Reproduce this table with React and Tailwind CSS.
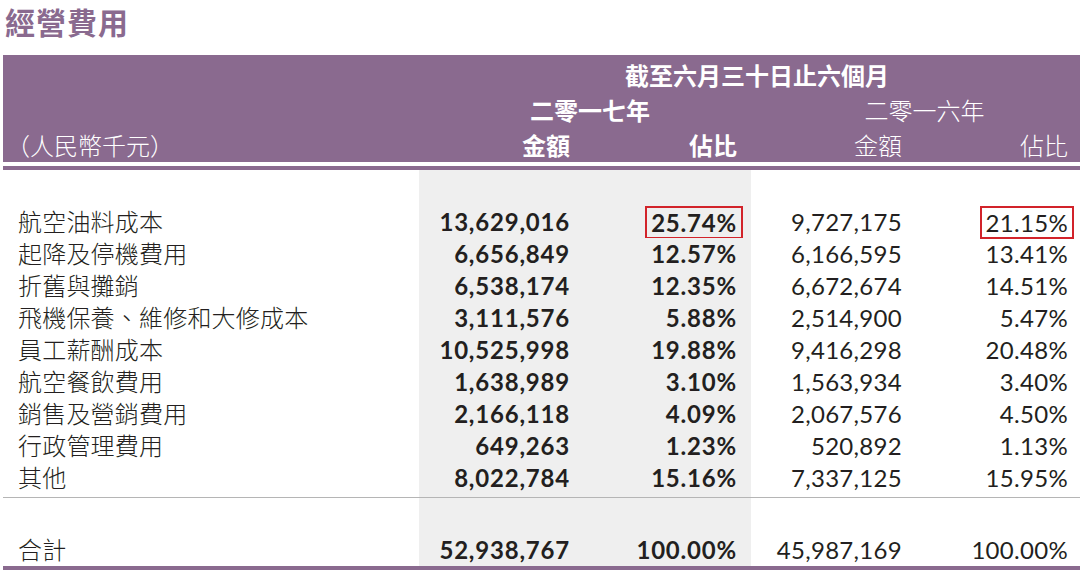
import React from "react";

const rows = [
  { label: "航空油料成本", a17: "13,629,016", p17: "25.74%", a16: "9,727,175", p16: "21.15%", mark: true },
  { label: "起降及停機費用", a17: "6,656,849", p17: "12.57%", a16: "6,166,595", p16: "13.41%" },
  { label: "折舊與攤銷", a17: "6,538,174", p17: "12.35%", a16: "6,672,674", p16: "14.51%" },
  { label: "飛機保養、維修和大修成本", a17: "3,111,576", p17: "5.88%", a16: "2,514,900", p16: "5.47%" },
  { label: "員工薪酬成本", a17: "10,525,998", p17: "19.88%", a16: "9,416,298", p16: "20.48%" },
  { label: "航空餐飲費用", a17: "1,638,989", p17: "3.10%", a16: "1,563,934", p16: "3.40%" },
  { label: "銷售及營銷費用", a17: "2,166,118", p17: "4.09%", a16: "2,067,576", p16: "4.50%" },
  { label: "行政管理費用", a17: "649,263", p17: "1.23%", a16: "520,892", p16: "1.13%" },
  { label: "其他", a17: "8,022,784", p17: "15.16%", a16: "7,337,125", p16: "15.95%" },
];

const cjk = "font-['Noto_Sans_CJK_TC','Noto_Sans_CJK_SC',sans-serif]";
const num = "font-['Lato','Liberation_Sans',sans-serif] text-[24px]";
const grid = "grid grid-cols-[416px_166px_166px_166px_163px]";

function Spacer({ h }) {
  return (
    <div className={grid} style={{ height: h }}>
      <div />
      <div className="bg-[#efefef]" />
      <div className="bg-[#efefef]" />
      <div />
      <div />
    </div>
  );
}

// red outline around the highlighted percentages
function Boxed({ children, on }) {
  if (!on) return <span>{children}</span>;
  return (
    <span className="inline-block h-[33px] border-2 border-[#d2232a] px-[4px] leading-[29px] -mr-[6px]">
      {children}
    </span>
  );
}

function Row({ r }) {
  return (
    <div className={`${grid} h-[32px] leading-[32px] text-[#231f20]`}>
      <div className={`${cjk} pl-[15px] text-[24px] leading-[30px] font-light tracking-[0.2px]`}>{r.label}</div>
      <div className={`${num} bg-[#efefef] pr-[15px] text-right font-bold tracking-[0.8px]`}>{r.a17}</div>
      <div className={`${num} bg-[#efefef] pr-[14px] text-right font-bold tracking-[0.8px]`}>
        <Boxed on={r.mark}>{r.p17}</Boxed>
      </div>
      <div className={`${num} pr-[15px] text-right tracking-[0.3px]`}>{r.a16}</div>
      <div className={`${num} pr-[12px] text-right tracking-[0.3px]`}>
        <Boxed on={r.mark}>{r.p16}</Boxed>
      </div>
    </div>
  );
}

export default function App() {
  return (
    <div className="w-[1080px] h-[575px] overflow-hidden bg-white">
      <div className={`${cjk} h-[55px] pl-[5px] pt-[4px] text-[30px] leading-[34px] font-bold text-[#8a6a8f] tracking-[1px]`}>
        經營費用
      </div>

      <div className="ml-[3px] w-[1077px]">
        <div className={`${cjk} bg-[#8a6a8f] pt-[2px] text-white text-[24px] leading-[35px]`}>
          <div className={`${grid} h-[35px]`}>
            <div />
            <div className="col-span-4 pl-[15px] text-center font-bold">截至六月三十日止六個月</div>
          </div>
          <div className={`${grid} h-[35px]`}>
            <div />
            <div className="col-span-2 pl-[10px] text-center font-bold">二零一七年</div>
            <div className="col-span-2 pl-[18px] text-center font-light">二零一六年</div>
          </div>
          <div className={`${grid} h-[35px]`}>
            <div className="pl-[3px] font-light">（人民幣千元）</div>
            <div className="pr-[15px] text-right font-bold">金額</div>
            <div className="pr-[14px] text-right font-bold">佔比</div>
            <div className="pr-[15px] text-right font-light">金額</div>
            <div className="pr-[12px] text-right font-light">佔比</div>
          </div>
        </div>
        <div className="h-[4px]" />
        <div className="h-[4px] bg-[#8a6a8f]" />

        <Spacer h={36} />
        {rows.map((r) => (
          <Row key={r.label} r={r} />
        ))}
        <Spacer h={3} />
        <div className="h-px bg-[#b5b5b5]" />
        <Spacer h={36} />
        <Row r={{ label: "合計", a17: "52,938,767", p17: "100.00%", a16: "45,987,169", p16: "100.00%" }} />
        <div className="h-[4px] bg-[#8a6a8f]" />
      </div>
    </div>
  );
}
